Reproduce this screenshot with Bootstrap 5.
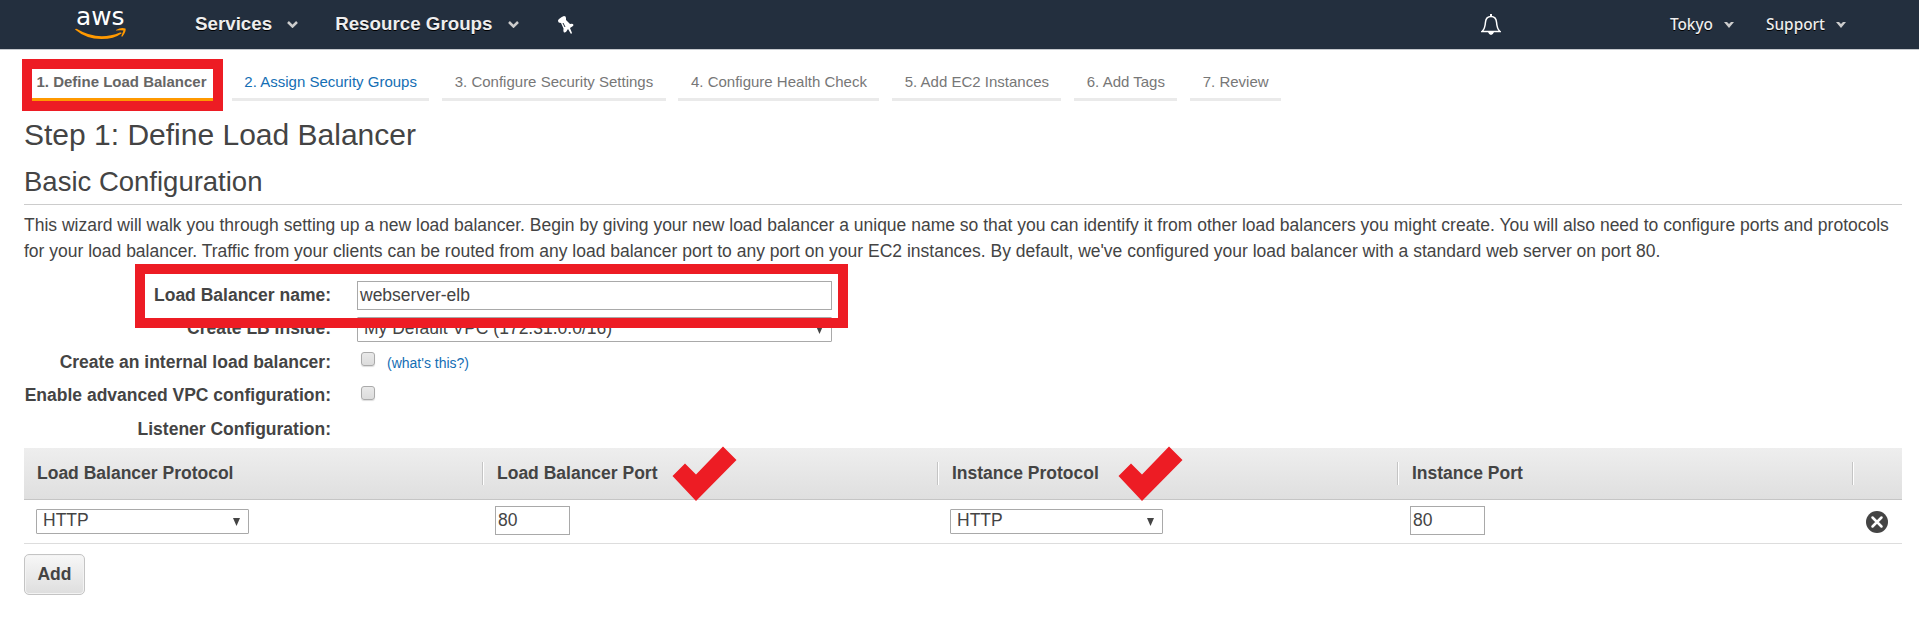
<!DOCTYPE html>
<html lang="en">
<head>
<meta charset="utf-8">
<title>Define Load Balancer</title>
<link href="https://cdn.jsdelivr.net/npm/bootstrap@5.3.0/dist/css/bootstrap.min.css" rel="stylesheet">
<style>
body{font-family:"Liberation Sans",Arial,sans-serif;font-size:17.5px;line-height:26.25px;color:#444;background:#fff;overflow:hidden}
.topbar{height:50px;background:#232f3e;border-bottom:1px solid #c5c9cd;color:#fff;padding:0 73px 0 75px;text-shadow:0 1px 0 #000}
.topbar a{color:#eee;text-decoration:none;line-height:24px}
.brand{width:51px;margin-right:69px;text-shadow:none}
.brand svg{overflow:visible}
.main-link{font-size:18.75px;font-weight:700;margin-top:-2px}
.main-link+svg{margin-left:15px}
.groups{margin-left:37px}
.pin{margin-left:39px}
.side-link{font-family:"Noto Sans","Open Sans",sans-serif;font-size:15.4px;font-weight:500;margin-top:1px}
.side-link+svg{margin-left:11px;margin-top:1px}
.region{margin-left:169px}
.support{margin-left:32px}
.page{padding:14px 17px 0 24px}
.steps{gap:12.8px;font-size:15px;height:37px}
.step{padding:5px 12.5px 0;height:37px;border-bottom:3px solid #eaeaea;color:#777;white-space:nowrap;line-height:26px}
.step.current{border-color:#ff9900;color:#666;font-weight:700;position:relative}
.step.open{color:#146eb4}
.frame{position:absolute;border:10px solid #ed1c24;pointer-events:none}
.frame-step{left:-2px;top:-5px;width:201px;height:52px}
.frame-name{left:111px;top:-17px;width:713px;height:64px;z-index:2}
h1{font-size:30px;line-height:36px;margin:16px 0 0;font-weight:400}
h2{font-size:27.5px;line-height:34px;margin:5px 0 0;height:47px;padding-top:7px;border-bottom:1px solid #ccc;font-weight:400}
.intro{margin:7px 0 0;height:69px}
.line{height:33.4px;position:relative}
.caption{width:307px;margin-right:26px;padding-top:1px;text-align:right;font-weight:700;white-space:nowrap;line-height:27px}
.box{border:1px solid #a9a9a9;background:#fff;color:#444;padding:0 2px;height:29px;line-height:26px}
.drop{border:1px solid #a9a9a9;background:#fff;height:25px;line-height:21px;padding:0 8px 0 6px;width:213px;border-radius:1px}
.drop span{margin-top:-2px}
.vpc{margin-top:3px}
.wide{width:475px}
.port{width:75px}
.tick{width:14px;height:14px;border:1px solid #aaa;border-radius:3px;background:linear-gradient(#e9e9e9,#dcdcdc);box-shadow:0 1px 1px #ddd;margin:4.5px 0 0 4px}
.hint{font-size:14px;color:#146eb4;text-decoration:none;margin:2px 0 0 12px}
.listeners{display:grid;grid-template-columns:458px 455px 460px 455px 50px}
.headcell{height:52px;background:linear-gradient(#eee,#dfdfdf);border-bottom:1px solid #c5c5c5;font-weight:700;padding:0 15px;line-height:50px;position:relative}
.headcell:first-child{padding-left:13px}
.headcell+.headcell::before{content:"";position:absolute;left:0;top:14px;width:2px;height:23px;background:linear-gradient(90deg,#c4c4c4 50%,#fff 50%)}
.bodycell{height:44px;border-bottom:1px solid #ddd;padding-left:13px;padding-bottom:1px}
.bodycell.first{padding-left:12px}
.bodycell .drop{margin-top:2px}
.check{position:absolute;top:-2px;width:65px;height:56px;z-index:1}
.remove{margin:2px 0 0 1px}
.add{margin-top:10px;width:61px;height:41px;border:1px solid #c4c4c4;border-radius:5px;background:linear-gradient(#f7f7f7,#dedede);font-weight:700;color:#444;font-size:17.5px;box-shadow:inset 0 0 0 1px #f3f3f3;padding:0}
</style>
</head>
<body>
<nav class="topbar d-flex align-items-center">
  <a href="#" class="brand d-flex" aria-label="aws"><svg width="51" height="41" viewBox="0 0 51 41"><text x="1" y="20.500" font-family="DejaVu Sans,sans-serif" font-size="25.500" fill="#fff" textLength="48.500" lengthAdjust="spacingAndGlyphs">aws</text><path d="M0 25.500Q.500 24.500 2 25Q23 37.500 45 28.500Q47 28 46.500 29.500Q39 35 26.500 35Q11 35 0 25.500Z" fill="#ff9900"/><path d="M41 26Q46 23 50.500 24.500Q51.500 27 47.500 32.500Q46 33 46.500 31.500L48.500 26.500Q46 26 41 26.500Z" fill="#ff9900"/></svg></a>
  <a href="#" class="main-link">Services</a>
  <svg width="11" height="7"><path d="M1 1L5.500 5.500L10 1" fill="none" stroke="#ccc" stroke-width="2.500"/></svg>
  <a href="#" class="main-link groups">Resource Groups</a>
  <svg width="11" height="7"><path d="M1 1L5.500 5.500L10 1" fill="none" stroke="#ccc" stroke-width="2.500"/></svg>
  <svg class="pin" width="16" height="18" viewBox="0 0 16 18"><path d="M6 0Q8 0 8 2L8 4L12 8Q15 7 15.500 9Q15.500 10 12 12L14 17L13 18L10 13Q8 17 6 16.500Q5 15 5.500 12.500L3 7Q0 7 0 4.500Q1 2 6 0Z" fill="#fff"/><path d="M5 7L7 11" stroke="#232f3e" stroke-width="1"/></svg>
  <svg class="ms-auto" width="20" height="22" viewBox="0 0 20 22"><path d="M1 17.500Q4 15 4.500 8Q5 2.500 10 2.500Q15 2.500 15.500 8Q16 15 19 17.500Z" fill="none" stroke="#fff" stroke-width="1.500"/><path d="M9 0H11V3H9ZM7 18H13Q12 21 10 21Q8 21 7 18Z" fill="#fff"/></svg>
  <a href="#" class="side-link region">Tokyo</a>
  <svg width="10" height="6"><path d="M0 0H3L5 2L7 0H10L5 6Z" fill="#ccc"/></svg>
  <a href="#" class="side-link support">Support</a>
  <svg width="10" height="6"><path d="M0 0H3L5 2L7 0H10L5 6Z" fill="#ccc"/></svg>
</nav>
<main class="page">
  <div class="steps d-flex">
    <div class="step current">1. Define Load Balancer<span class="frame frame-step"></span></div>
    <div class="step open">2. Assign Security Groups</div>
    <div class="step">3. Configure Security Settings</div>
    <div class="step">4. Configure Health Check</div>
    <div class="step">5. Add EC2 Instances</div>
    <div class="step">6. Add Tags</div>
    <div class="step">7. Review</div>
  </div>
  <h1>Step 1: Define Load Balancer</h1>
  <h2>Basic Configuration</h2>
  <p class="intro">This wizard will walk you through setting up a new load balancer. Begin by giving your new load balancer a unique name so that you can identify it from other load balancers you might create. You will also need to configure ports and protocols for your load balancer. Traffic from your clients can be routed from any load balancer port to any port on your EC2 instances. By default, we've configured your load balancer with a standard web server on port 80.</p>
  <div class="line d-flex"><div class="caption">Load Balancer name:</div><div class="box wide">webserver-elb</div><span class="frame frame-name"></span></div>
  <div class="line d-flex"><div class="caption">Create LB Inside:</div><div class="drop wide vpc d-flex justify-content-between align-items-center"><span>My Default VPC (172.31.0.0/16)</span><svg width="7" height="8"><path d="M0 0H7L3.500 8Z" fill="#444"/></svg></div></div>
  <div class="line d-flex"><div class="caption">Create an internal load balancer:</div><span class="tick"></span><a href="#" class="hint">(what's this?)</a></div>
  <div class="line d-flex"><div class="caption">Enable advanced VPC configuration:</div><span class="tick"></span></div>
  <div class="line d-flex"><div class="caption">Listener Configuration:</div></div>
  <div class="listeners">
    <div class="headcell">Load Balancer Protocol</div>
    <div class="headcell">Load Balancer Port<svg class="check" style="left:190px" viewBox="0 0 65 56"><path d="M51 .500L64.500 14L24 55L.500 30L13 17.500L24 28.500Z" fill="#ed1c24"/></svg></div>
    <div class="headcell">Instance Protocol<svg class="check" style="left:181px" viewBox="0 0 65 56"><path d="M51 .500L64.500 14L24 55L.500 30L13 17.500L24 28.500Z" fill="#ed1c24"/></svg></div>
    <div class="headcell">Instance Port</div>
    <div class="headcell"></div>
    <div class="bodycell first d-flex align-items-center"><div class="drop d-flex justify-content-between align-items-center"><span>HTTP</span><svg width="7" height="8"><path d="M0 0H7L3.500 8Z" fill="#444"/></svg></div></div>
    <div class="bodycell d-flex align-items-center"><div class="box port">80</div></div>
    <div class="bodycell d-flex align-items-center"><div class="drop d-flex justify-content-between align-items-center"><span>HTTP</span><svg width="7" height="8"><path d="M0 0H7L3.500 8Z" fill="#444"/></svg></div></div>
    <div class="bodycell d-flex align-items-center"><div class="box port">80</div></div>
    <div class="bodycell d-flex align-items-center"><svg class="remove" width="22" height="22"><circle cx="11" cy="11" r="11" fill="#444"/><path d="M6.500 6.500L15.500 15.500M15.500 6.500L6.500 15.500" stroke="#fff" stroke-width="2.500" stroke-linecap="round"/></svg></div>
  </div>
  <button class="add" type="button">Add</button>
</main>
<script src="https://cdn.jsdelivr.net/npm/bootstrap@5.3.0/dist/js/bootstrap.bundle.min.js"></script>
</body>
</html>
